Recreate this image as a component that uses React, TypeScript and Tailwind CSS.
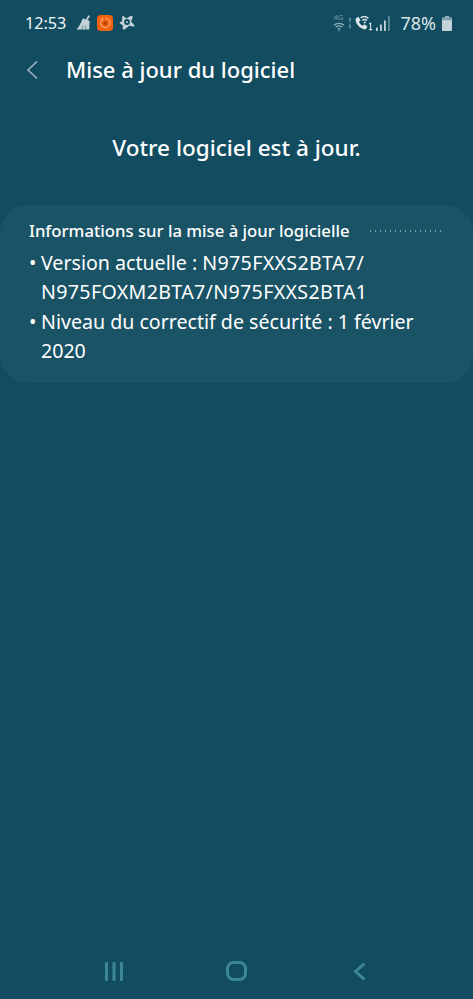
const font = "[font-family:'Noto_Sans','Open_Sans',sans-serif]";

function BroomIcon() {
  return (
    <svg width="15" height="15" viewBox="0 0 15 15" fill="#c3d3d9">
      <path d="M12.4 0.2 L14 1 L11.6 5 L10 4.2 Z" />
      <path d="M6.6 3.8 C8.4 3.4 12 4.6 13.6 6.2 L13.2 14.6 L0.4 14.6 C2 13 4.6 9.4 6.6 3.8 Z" />
      <path d="M5.4 14.6 L7.2 10.4 M9.4 14.6 L10 10.4" stroke="#124c5f" strokeWidth="0.5" />
    </svg>
  );
}

function OrangeAppIcon() {
  return (
    <svg width="16" height="16" viewBox="0 0 17 17">
      <rect width="17" height="17" rx="4" fill="#f0620f" />
      <path d="M5 5.2 A5 5 0 1 0 9 3.4" fill="none" stroke="#ffb98a" strokeWidth="1" />
      <circle cx="8.6" cy="8.8" r="1.8" fill="#a83d05" />
      <path d="M4.4 3.4 L7.2 4 L5.4 6 Z" fill="#ffb98a" />
    </svg>
  );
}

function AvastIcon() {
  return (
    <svg width="16" height="15" viewBox="0 0 16 15" fill="#c3d3d9">
      <path d="M3.4 1.2 C4 0.8 4.6 1 5 1.4 L7.4 3.4 L12 0.8 C13.2 0.4 14 1.2 13.6 2.4 L12 6.4 L15.2 10 C15.8 11 15 12 13.8 11.6 L10.4 10.8 L5.4 14.4 C4.2 14.8 3.4 14 3.6 13 L4 10.4 L1 8.6 C0.4 8 0.6 7.2 1.4 7 L3 6.4 Z" />
      <circle cx="8" cy="7" r="2.9" fill="#124c60" />
      <circle cx="8" cy="7" r="1" fill="#c3d3d9" />
    </svg>
  );
}

function WifiData() {
  return (
    <div className="relative h-[19px] w-[12px]">
      <span className={`absolute left-0 top-[-1px] text-[7.5px] leading-[9px] text-[#6f99a6] ${font}`}>4G</span>
      <svg className="absolute left-0 top-[8px]" width="12" height="10" viewBox="0 0 14 11" fill="none" stroke="#8fb0ba" strokeWidth="1.4">
        <path d="M1 3.4 C4.4 0.6 9.6 0.6 13 3.4" />
        <path d="M3.2 5.8 C5.4 4 8.6 4 10.8 5.8" />
        <path d="M5.4 8 C6.4 7.3 7.6 7.3 8.6 8" />
        <circle cx="7" cy="9.8" r="0.8" fill="#8fb0ba" stroke="none" />
      </svg>
    </div>
  );
}

function TransferArrows() {
  return (
    <svg width="4" height="18" viewBox="0 0 6 18" fill="#5f8b99">
      <path d="M3 0 L5.5 4 L3.9 4 L3.9 8 L2.1 8 L2.1 4 L0.5 4 Z" />
      <path d="M3 18 L5.5 14 L3.9 14 L3.9 10 L2.1 10 L2.1 14 L0.5 14 Z" />
    </svg>
  );
}

function VoWifiCall() {
  return (
    <svg width="18" height="15" viewBox="0 0 18 15" fill="none">
      <path d="M0.6 2.6 L3.4 0.8 L5.6 4.4 L4 5.8 C4.6 7.6 6 9 7.8 9.8 L9.4 8.2 L12.4 10.6 L10.6 13.4 C5.6 13.8 0 8 0.6 2.6 Z" fill="#dbe6ea" />
      <path d="M5.6 2 C8 0.2 11.2 0.4 13.4 2.4" stroke="#dbe6ea" strokeWidth="1.5" />
      <path d="M7.4 4.4 C8.8 3.4 10.6 3.4 11.8 4.6" stroke="#dbe6ea" strokeWidth="1.5" />
      <circle cx="9.8" cy="6.6" r="1" fill="#dbe6ea" />
      <path d="M14.2 8 L15.6 7.2 L15.6 13.6 M14 13.6 L17.2 13.6" stroke="#dbe6ea" strokeWidth="1.1" />
    </svg>
  );
}

function SignalBars() {
  return (
    <svg width="14" height="15" viewBox="0 0 14 15">
      <rect x="0" y="11.5" width="1.8" height="3.5" fill="#c3d3d9" />
      <rect x="4" y="8.5" width="1.8" height="6.5" fill="#c3d3d9" />
      <rect x="8" y="4.5" width="1.8" height="10.5" fill="#c3d3d9" />
      <rect x="12" y="0" width="1.8" height="15" fill="#5f8b99" />
    </svg>
  );
}

function BatteryIcon() {
  return (
    <svg width="10" height="15" viewBox="0 0 10 15">
      <rect x="3" y="0" width="4" height="1.6" fill="#94b0ba" />
      <rect x="0" y="1.6" width="10" height="13.4" rx="1" fill="#c3d3d9" />
      <rect x="0" y="1.6" width="10" height="2.6" rx="1" fill="#7d9fab" />
    </svg>
  );
}

function StatusBar() {
  return (
    <div className="flex h-[46px] items-center justify-between pl-[25px] pr-[21px]">
      <div className="flex items-center">
        <span className={`w-[51px] text-[16.2px] text-[#f0f5f6] ${font}`}>12:53</span>
        <div className="flex items-center gap-[6px]">
          <BroomIcon />
          <OrangeAppIcon />
          <AvastIcon />
        </div>
      </div>
      <div className="flex items-center">
        <div className="flex items-center gap-[3px]">
          <WifiData />
          <TransferArrows />
          <VoWifiCall />
          <SignalBars />
        </div>
        <span className={`ml-[10px] text-[18px] text-[#d9e4e7] ${font}`}>78%</span>
        <span className="ml-[6px]">
          <BatteryIcon />
        </span>
      </div>
    </div>
  );
}

function Header() {
  return (
    <div className="flex h-[48px] items-center pl-[26px]">
      <svg width="12" height="20" viewBox="0 0 12 20" fill="none" stroke="#9db7c0" strokeWidth="1.6">
        <path d="M11 1.5 L2 10 L11 18.5" />
      </svg>
      <h1 className={`ml-[28px] -mt-[2px] text-[22px] font-medium text-white ${font}`}>Mise à jour du logiciel</h1>
    </div>
  );
}

function InfoCard() {
  return (
    <div className="rounded-[28px] bg-[#195365] pb-[18px] pl-[29px] pr-[30px] pt-[13px]">
      <div className="flex items-center justify-between">
        <h2 className={`text-[16.7px] font-medium leading-[26px] text-white ${font}`}>
          Informations sur la mise à jour logicielle
        </h2>
        <div className="h-[2px] w-[75px] bg-[radial-gradient(circle,#7fa3ae_0.7px,transparent_1px)] bg-[length:5px_2px]" />
      </div>
      <ul className={`mt-[4px] text-[19.6px] leading-[29.3px] text-white ${font}`}>
        <li className="flex">
          <span className="w-[12px] shrink-0">•</span>
          <span>
            Version actuelle : <span className="tracking-[0.35px]">N975FXXS2BTA7/</span>
            <br />
            <span className="tracking-[0.35px]">N975FOXM2BTA7/N975FXXS2BTA1</span>
          </span>
        </li>
        <li className="flex">
          <span className="w-[12px] shrink-0">•</span>
          <span>Niveau du correctif de sécurité : 1 février 2020</span>
        </li>
      </ul>
    </div>
  );
}

function NavBar() {
  return (
    <div className="flex h-[54px] items-start pl-[105px] pt-[17px]">
      <svg width="18" height="19" viewBox="0 0 18 19" fill="#3c8795">
        <rect x="0" y="0" width="3" height="19" rx="1" />
        <rect x="7.5" y="0" width="3" height="19" rx="1" />
        <rect x="15" y="0" width="3" height="19" rx="1" />
      </svg>
      <svg className="ml-[103px] -mt-[1px]" width="21" height="20" viewBox="0 0 21 20" fill="none" stroke="#3c8795" strokeWidth="3">
        <rect x="1.5" y="1.5" width="18" height="17" rx="6" />
      </svg>
      <svg className="ml-[106px]" width="13" height="19" viewBox="0 0 13 19" fill="none" stroke="#3c8795" strokeWidth="3">
        <path d="M11.5 1.5 L2.5 9.5 L11.5 17.5" />
      </svg>
    </div>
  );
}

export default function App() {
  return (
    <div className="flex h-[999px] w-full flex-col overflow-hidden bg-[#124c60]">
      <StatusBar />
      <Header />
      <p className={`mt-[37px] text-center text-[22.5px] font-medium leading-[34px] text-white ${font}`}>
        Votre logiciel est à jour.
      </p>
      <div className="mt-[40px]">
        <InfoCard />
      </div>
      <div className="flex-1" />
      <NavBar />
    </div>
  );
}
